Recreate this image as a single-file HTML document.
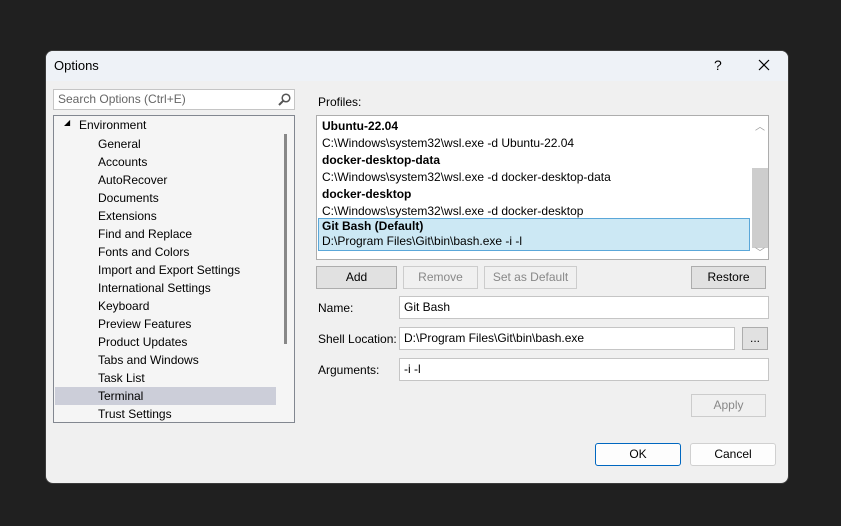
<!DOCTYPE html>
<html><head><style>
*{box-sizing:border-box;margin:0;padding:0}
body{width:841px;height:526px;background:#202020;font-family:"Liberation Sans",sans-serif;font-size:12px;color:#000;position:relative;overflow:hidden}
.a{position:absolute;white-space:nowrap}
#dlg{left:46px;top:51px;width:742px;height:432px;background:#f0f0f0;border-radius:7px;overflow:hidden;box-shadow:0 0 0 1px #3a3a3a}
#tb{left:0;top:0;width:742px;height:30px;background:#eef2f7}
.btn{position:absolute;border:1px solid #adadad;background:#e1e1e1;text-align:center;line-height:20px;height:23px}
.dis{border-color:#cccccc;background:#f0f0f0;color:#888}
.inp{position:absolute;background:#fff;border:1px solid #c5c5c5;height:23px;line-height:21px;padding-left:4px}
</style></head><body>
<div id="dlg" class="a">
<div id="tb" class="a"></div>
<div class="a" style="left:8px;top:7px;font-size:13px">Options</div>
<div class="a" style="left:668px;top:6px;font-size:14px">?</div>
<svg class="a" style="left:712px;top:8px" width="12" height="12"><path d="M1 1L11 11M11 1L1 11" stroke="#000" stroke-width="1.2"/></svg>

<div class="inp" style="left:7px;top:38px;width:242px;height:21px;line-height:19px;color:#666">Search Options (Ctrl+E)</div>
<svg class="a" style="left:232px;top:42px" width="13" height="13"><circle cx="8" cy="5" r="3.8" fill="none" stroke="#555" stroke-width="1.5"/><path d="M5.2 7.8L1 12" stroke="#555" stroke-width="2"/></svg>

<div class="a" style="left:7px;top:64px;width:242px;height:308px;background:#f5f5f5;border:1px solid #828790">
<div class="a" style="left:1px;top:271px;width:221px;height:18px;background:#ccced9"></div>
<div class="a" style="left:230px;top:18px;width:3px;height:210px;background:#888"></div>
<div class="a" style="left:10px;top:2px;font-size:8px">◢</div>
<div class="a" style="left:25px;top:2px">Environment</div>
<div style="position:absolute;left:44px;top:19px;line-height:18px">General<br>Accounts<br>AutoRecover<br>Documents<br>Extensions<br>Find and Replace<br>Fonts and Colors<br>Import and Export Settings<br>International Settings<br>Keyboard<br>Preview Features<br>Product Updates<br>Tabs and Windows<br>Task List<br>Terminal<br>Trust Settings</div>
</div>

<div class="a" style="left:272px;top:44px">Profiles:</div>
<div class="a" style="left:270px;top:64px;width:453px;height:145px;background:#fff;border:1px solid #adadad">
<div class="a" style="left:435px;top:52px;width:16px;height:80px;background:#cdcdcd"></div>
<div class="a" style="left:438px;top:2px;color:#999;font-size:10px">︿</div>
<div class="a" style="left:438px;top:128px;color:#999;font-size:10px">﹀</div>
<div class="a" style="left:1px;top:102px;width:432px;height:33px;background:#cce8f4;border:1px solid #5aa7d9"></div>
<div class="a" style="left:5px;top:2px;line-height:17px"><b>Ubuntu-22.04</b><br>C:\Windows\system32\wsl.exe -d Ubuntu-22.04</div>
<div class="a" style="left:5px;top:36px;line-height:17px"><b>docker-desktop-data</b><br>C:\Windows\system32\wsl.exe -d docker-desktop-data</div>
<div class="a" style="left:5px;top:70px;line-height:17px"><b>docker-desktop</b><br>C:\Windows\system32\wsl.exe -d docker-desktop</div>
<div class="a" style="left:5px;top:103px;line-height:15px"><b>Git Bash (Default)</b><br>D:\Program Files\Git\bin\bash.exe -i -l</div>
</div>

<div class="btn" style="left:270px;top:215px;width:81px">Add</div>
<div class="btn dis" style="left:357px;top:215px;width:75px">Remove</div>
<div class="btn dis" style="left:438px;top:215px;width:93px">Set as Default</div>
<div class="btn" style="left:645px;top:215px;width:75px">Restore</div>

<div class="a" style="left:272px;top:250px">Name:</div>
<div class="inp" style="left:353px;top:245px;width:370px">Git Bash</div>
<div class="a" style="left:272px;top:281px">Shell Location:</div>
<div class="inp" style="left:353px;top:276px;width:336px">D:\Program Files\Git\bin\bash.exe</div>
<div class="btn" style="left:696px;top:276px;width:26px">...</div>
<div class="a" style="left:272px;top:312px">Arguments:</div>
<div class="inp" style="left:353px;top:307px;width:370px">-i -l</div>

<div class="btn dis" style="left:645px;top:343px;width:75px">Apply</div>
<div class="btn" style="left:549px;top:392px;width:86px;background:#fdfdfd;border:1px solid #0067c0;border-radius:3px">OK</div>
<div class="btn" style="left:644px;top:392px;width:86px;background:#fdfdfd;border:1px solid #d0d0d0;border-radius:3px">Cancel</div>
</div>
</body></html>
